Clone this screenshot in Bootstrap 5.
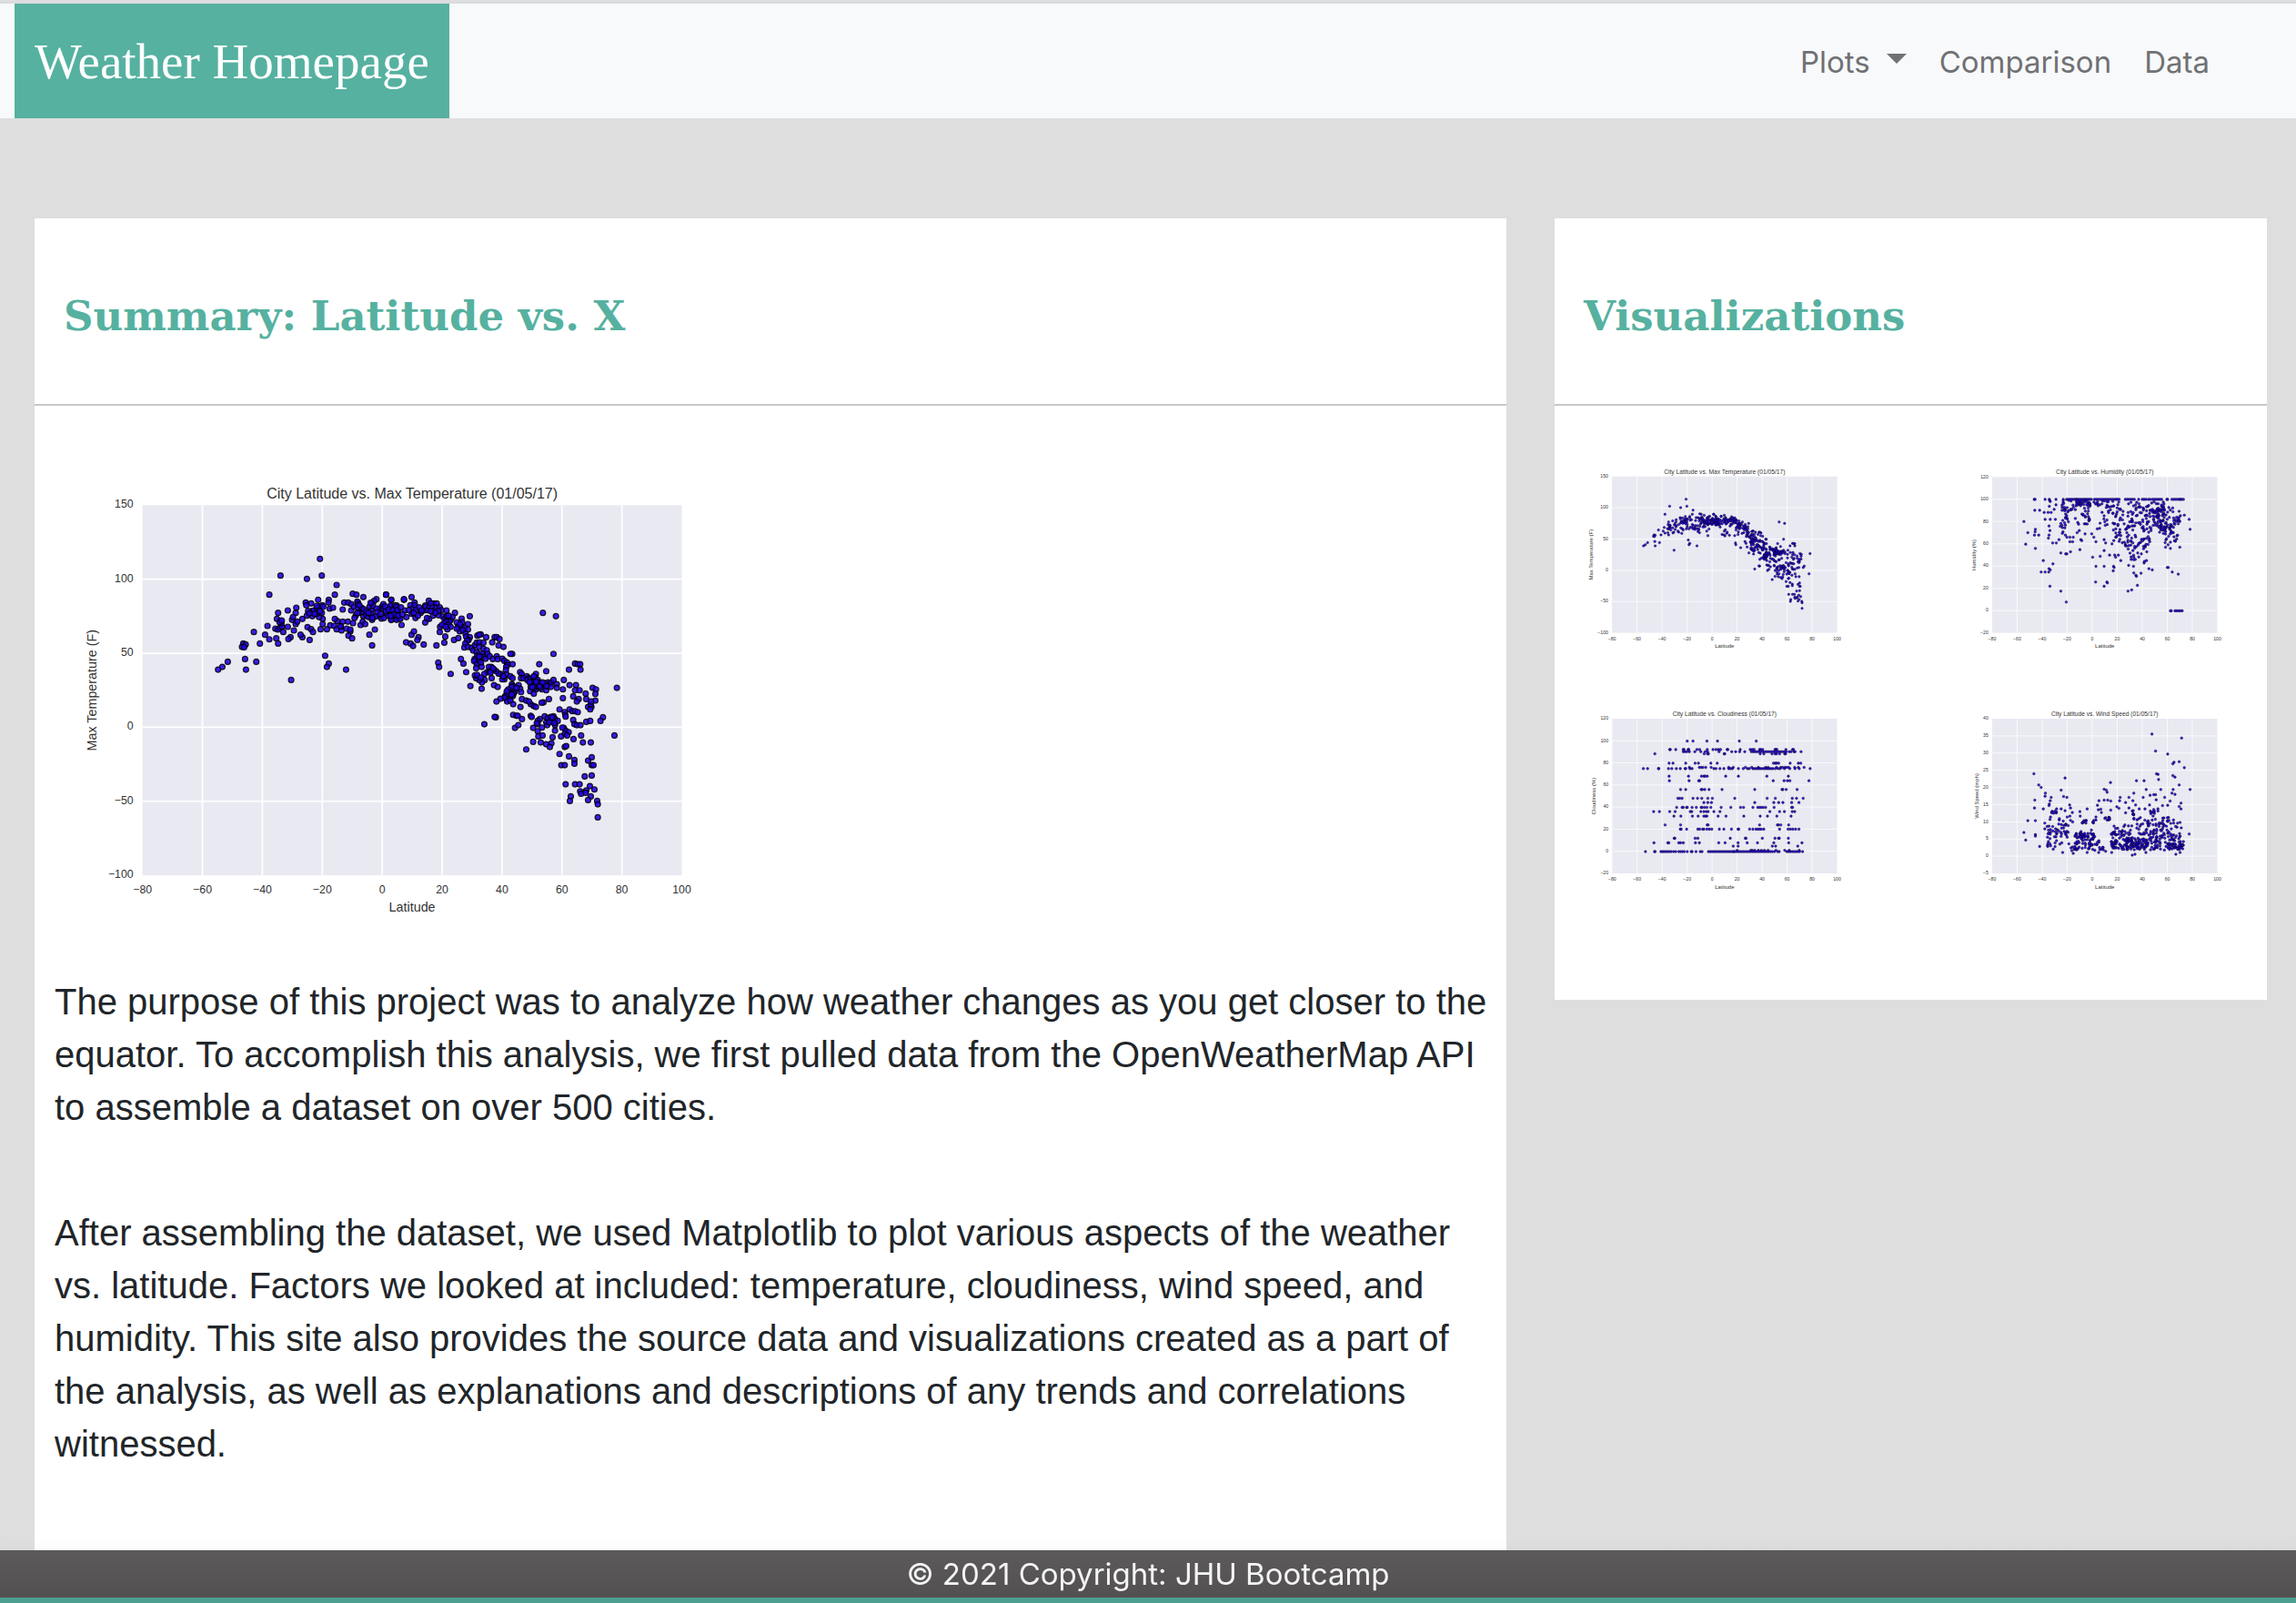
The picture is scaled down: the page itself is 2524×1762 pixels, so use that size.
<!DOCTYPE html>
<html lang="en">
<head>
<meta charset="utf-8">
<meta name="viewport" content="width=device-width, initial-scale=1">
<title>Weather Homepage</title>
<link rel="stylesheet" href="https://cdn.jsdelivr.net/npm/bootstrap@5.3.0/dist/css/bootstrap.min.css">
<style>
  :root { --teal: #56b1a0; }
  body { background: #dedede; font-family: Inter, "Liberation Sans", sans-serif; color: #212529; }
  .site-nav { background: #f8f9fb; border-top: 2px solid #dadce0; margin-top: 2px; padding: 0 77px 0 16px; }
  .site-brand { background: var(--teal); color: #fff; font-family: "Liberation Serif", serif; font-size: 55px; line-height: 82px; padding: 23px 22px 21px; margin: 0; }
  .site-brand:hover { color: #fff; }
  .site-nav .navbar-nav { padding-top: 2px; }
  .site-nav .navbar-nav .nav-link { color: #707173; font-size: 33px; line-height: 50px; padding: 8px 18px; }
  .site-nav .dropdown-toggle::after { margin-left: 18px; border-top-width: 11px; border-left-width: 11px; border-right-width: 11px; vertical-align: 10px; }
  .panels { display: grid; grid-template-columns: 31fr 15fr; gap: 53px; align-items: start; padding: 110px 32px 0 38px; }
  .panel { background: #fff; }
  .panel-title { color: var(--teal); font-family: "DejaVu Serif", serif; font-weight: 700; font-size: 45px; line-height: 60px; margin: 0; padding: 78px 32px 66px; border-bottom: 2px solid #c8c8c8; }
  .summary-body { padding: 58px 12px 54px 22px; font-family: "Liberation Sans", sans-serif; font-size: 40px; line-height: 58px; }
  .summary-body p { margin: 0 0 80px; }
  .summary-body .main-plot { width: 49%; padding-right: 5px; margin-bottom: 58px; }
  .thumbs { display: grid; grid-template-columns: 1fr 1fr; gap: 53px 98px; padding: 56px 23px 118px; }
  .plot { display: block; width: 100%; height: auto; font-family: "Liberation Sans", sans-serif; fill: #333; }
  .plot .area { fill: #e9e9f2; }
  .plot .rule { stroke: #fff; fill: none; }
  .plot .dots circle { fill: #2000e6; fill-opacity: .88; stroke: #000; stroke-opacity: .85; }
  .site-footer { background: linear-gradient(#5c5a5b, #535051); color: #f4f4f4; border-bottom: 6px solid #4c9e8f; font-size: 33px; line-height: 52px; box-shadow: 0 -2px 14px rgba(0,0,0,.03); }
</style>
</head>
<body>
<nav class="navbar navbar-expand site-nav">
  <a class="navbar-brand site-brand" href="#">Weather Homepage</a>
  <ul class="navbar-nav ms-auto">
    <li class="nav-item dropdown">
      <a class="nav-link dropdown-toggle" href="#" role="button" data-bs-toggle="dropdown" aria-expanded="false">Plots</a>
      <ul class="dropdown-menu">
        <li><a class="dropdown-item" href="#">Max Temperature</a></li>
        <li><a class="dropdown-item" href="#">Humidity</a></li>
        <li><a class="dropdown-item" href="#">Cloudiness</a></li>
        <li><a class="dropdown-item" href="#">Wind Speed</a></li>
      </ul>
    </li>
    <li class="nav-item"><a class="nav-link" href="#">Comparison</a></li>
    <li class="nav-item"><a class="nav-link" href="#">Data</a></li>
  </ul>
</nav>

<main class="panels">
  <section class="panel">
    <h1 class="panel-title">Summary: Latitude vs. X</h1>
    <div class="summary-body">
      <div class="main-plot"><svg class="plot" data-plot="temp" viewBox="-60 -48 2313 1530" role="img" aria-label="Max temperature plot"></svg></div>
      <p>The purpose of this project was to analyze how weather changes as you get closer to the equator. To accomplish this analysis, we first pulled data from the OpenWeatherMap API to assemble a dataset on over 500 cities.</p>
      <p>After assembling the dataset, we used Matplotlib to plot various aspects of the weather vs. latitude. Factors we looked at included: temperature, cloudiness, wind speed, and humidity. This site also provides the source data and visualizations created as a part of the analysis, as well as explanations and descriptions of any trends and correlations witnessed.</p>
    </div>
  </section>

  <aside class="panel">
    <h2 class="panel-title">Visualizations</h2>
    <div class="thumbs">
      <a href="#"><svg class="plot" data-plot="temp" data-stretch="1.012" viewBox="-58 -50 2295 1530" role="img" aria-label="Max temperature"></svg></a>
      <a href="#"><svg class="plot" data-plot="humidity" viewBox="0 6 960 640" role="img" aria-label="Humidity"></svg></a>
      <a href="#"><svg class="plot" data-plot="cloud" viewBox="6 9 960 640" role="img" aria-label="Cloudiness"></svg></a>
      <a href="#"><svg class="plot" data-plot="wind" viewBox="0 9 960 640" role="img" aria-label="Wind speed"></svg></a>
    </div>
  </aside>
</main>

<footer class="site-footer fixed-bottom text-center">© 2021 Copyright: JHU Bootcamp</footer>

<script src="https://cdn.jsdelivr.net/npm/bootstrap@5.3.0/dist/js/bootstrap.bundle.min.js"></script>
<script>
/* "x,y x,y" -> [[x,y],...], shifted right by dx */
function pts(s, dx) { return s.trim().split(/\s+/).map(function (p) { p = p.split(','); return [+p[0] + (dx || 0), +p[1]]; }); }
/* rows "y:x x x; y:x x" -> points */
function rows(s) {
  var out = [];
  s.trim().split(';').forEach(function (r) {
    var q = r.split(':');
    q[1].trim().split(/\s+/).forEach(function (x) {
      var m = x.split('-');
      if (m.length === 2) { for (var k = +m[0]; k <= +m[1]; k += 6) out.push([k, +q[0]]); }
      else out.push([+x, +q[0]]);
    });
  });
  return out;
}
/* repeatable scatter inside a box: [x0,x1,y0,y1,count,skew]; skew > 1 packs the points towards y1 */
function cloud(seed, boxes) {
  var out = [];
  function rnd() { seed = (seed * 16807) % 2147483647; return seed / 2147483647; }
  boxes.forEach(function (b) {
    for (var i = 0; i < b[4]; i++) out.push([b[0] + rnd() * (b[1] - b[0]), b[3] - Math.pow(rnd(), b[5] || 1) * (b[3] - b[2])]);
  });
  return out;
}

var tempLeft = pts(`815,283 685,338 821,338 772,349 870,369 648,401 864,401 923,398 935,401 958,409 1033,401 809,418 844,418 768,427 786,430 770,436 895,427 908,427 918,432 940,427 1001,416 993,422 985,430 1050,418
 737,444 735,461 709,453 677,461 673,481 685,487 642,504 597,524 634,533 648,548 671,545 677,562 617,562 562,562 570,565 558,573 565,574 568,613 605,622 571,648 511,622 493,639 479,648 720,682 832,602 844,628 838,639 901,648
 668,513 676,516 683,510 690,506 694,524 709,507 729,519 718,541 711,547 757,541 751,533 781,550 735,498 740,490 757,481 723,484 726,475 688,495 682,492 689,486 774,508 786,515 792,524 817,515 838,515 849,502 862,504 870,515 884,507 886,519 903,513 907,490 890,490 872,488 864,481 824,498 824,481 812,475 804,464
 790,472 789,455 795,453 776,455 772,470 806,444 812,440 823,436 826,441 821,461 847,447 858,444 843,427 890,450 918,453 927,441 938,424 941,432 940,444 952,444 933,470 929,478 924,495 949,501 956,490 964,498 958,472 945,461 957,458 938,461 968,470 975,475 987,484 987,475 984,464 985,450 979,440 990,438 996,516 978,533 987,568 915,522 909,536 921,545 915,516
 1011,447 1020,440 1024,432 1024,447 1010,472 1018,480 1026,478 1033,461 1045,450 1048,441 1050,484 1060,481 1056,467 1065,455 1060,444 1068,437 1072,452 1067,470 1075,480 1002,447 1004,459 998,473 797,464 780,463 815,456 804,438 883,505 945,436 960,449 968,456 975,461 982,428 988,478 1015,465 1040,470 1032,455`);
var tempRight = pts(`13,401 30,418 72,418 72,416 97,409 107,427 154,421 142,437 170,430 180,430 64,501 97,533 105,522 120,541 116,550 79,558 94,562 102,570 137,565 179,568 185,625 188,639 226,662 142,493 190,524 191,507 208,539 205,559 237,550 251,544 260,613 268,628 277,656 291,702 289,472 240,461 212,453
 10,440 28,437 43,436 47,441 22,450 35,452 50,452 62,443 75,453 30,484 48,484 60,481 80,475 98,464 93,436 101,446 108,436 112,450 122,443 127,461 110,478 118,470 138,453 143,441 150,452 157,440 161,430 166,444 173,453 180,444 190,443 195,452 186,469 168,470 155,481 148,478 185,455 175,461 40,466 28,471 53,470 67,466 88,452 104,461 130,453 160,455
 200,473 206,481 213,472 220,478 226,484 232,475 222,490 211,490 204,495 218,501 226,507 215,515 197,501 210,507 219,470 246,492 262,480 264,492 283,498 250,507 262,507 272,510 283,516 256,522 246,513 266,518 275,530 257,498 277,539 289,541 285,550 280,553 274,562 271,575 283,573 295,576 300,585 306,567 312,559 321,558 334,559 314,536 325,532 320,533 343,541 371,541 378,541 387,547 384,568 363,558 400,573 320,573 334,579 345,584
 312,590 320,596 330,596 338,604 324,605 313,604 305,613 309,622 303,619 312,630 321,618 326,625 328,639 310,643 320,605 341,612 348,596 355,604 365,613 378,604 381,613 396,612 403,619 412,625 430,630 429,596 423,596 413,633 409,639 408,650 410,664 403,680 396,680 391,662 384,661 376,653 369,648 360,639 352,639 346,656 355,653 337,662 361,676 338,682 329,690 320,682 310,676 306,667 313,665 325,674 328,711 369,699 381,705 366,644 357,658 400,670
 423,670 430,676 428,696 431,702 450,699 455,656 460,662 458,676 466,676 455,711 458,722 437,721 430,713 426,705 416,713 411,725 405,736 417,733 422,741 433,727 431,735 411,745 403,741 390,744 377,753 412,753 423,750 432,762 461,745 475,750 456,771 443,708 411,719 427,730
 477,670 483,676 479,682 490,679 497,685 507,662 505,673 500,670 513,682 521,691 505,691 497,696 490,705 488,719 500,727 507,713 502,708 517,705 511,699 526,696 533,701 527,713 521,708 541,716 544,702 547,690 552,696 558,690 565,682 556,705 576,696 576,708 599,682 596,713 541,653 518,630 493,690 512,694 537,693 542,702 486,689 500,702
 530,461 573,472 565,596 616,648 636,628 645,630 653,630 654,648 774,708 766,865 728,805 720,817 694,708 705,713 703,728 703,750 671,727 673,745 648,745 642,753 630,736 596,742 618,699 639,699 636,716 651,716 550,745 532,756 526,757 490,762 500,768 507,771 484,753
 375,805 371,804 337,828 438,840 449,831 461,811 432,797 443,800 447,800 490,800 493,804 536,802 520,811 513,817 513,828 510,825 527,839 498,840 513,851 515,868 529,865 498,886 523,888 475,911 541,894 558,891 553,903 562,871 570,849 570,831 562,820 550,814 541,822 544,831 556,804 565,802 570,811 579,817 585,779 602,788 604,797 605,803 599,840 605,849 615,854 602,860 610,865 590,868 594,839 618,779 627,785 636,785 645,788 630,814 634,828 642,831 654,831 656,865 631,877 662,888 688,888 673,820 686,817 679,771 690,771 686,779 688,762 689,753
 585,926 616,934 634,946 634,958 591,963 602,963 602,903 607,900 679,948 691,937 691,963 697,963 668,1000 691,997 605,1026 636,1026 651,1026 685,1032 700,1043 673,1046 653,1049 656,1057 671,1054 622,1066 619,1081 688,1066 679,1078 709,1081 711,1092 711,1135 546,808 557,812 568,824 551,822 560,805 519,702 529,690 495,706 508,688`, 1020);

var plots = {
  temp: { title: 'City Latitude vs. Max Temperature (01/05/17)', ylab: 'Max Temperature (F)', x0: 230, x1: 2008, y0: 106, y1: 1326, ticks: ['150','100','50','0','−50','−100'], k: 1, r: 9, yx: 80, points: tempLeft.concat(tempRight) },
  humidity: { title: 'City Latitude vs. Humidity (01/05/17)', ylab: 'Humidity (%)', x0: 120, x1: 864, y0: 73, y1: 588, ticks: ['120','100','80','60','40','20','0','−20'], k: .418, r: 4, yx: 68,
    points: rows(`147:259 262 295 309 331 355 366-396 400-450 458 464-520 524 530 534 540 560-592 604 616-628 636 642 650-684 697 700 714-738 742 746 752;515:709 712 724-750`)
    .concat(pts(`225,220 238,257 231,295 261,183 277,183 263,246 262,254 260,265 274,265 263,309 289,349 282,387 295,387 307,387 308,376 312,380 321,360 311,434 347,450 365,486 379,320 363,327 367,327 347,324 410,313 452,338 463,368 477,335 490,368 490,316 462,420 490,434 499,420 501,423 508,331 525,331 528,338 537,331 521,368 523,372 520,383 545,349 571,365 587,368 588,338 585,316 601,324 613,327 631,320 630,349 622,357 623,352 588,390 595,398 597,401 612,391 600,431 569,450 581,446 638,376 649,380 699,372 702,372 715,387 735,394 709,309 693,305 740,305 771,213 774,246 755,199 742,201 740,220 320,291 332,291 341,280 377,272 388,272 377,287 386,287 413,280 416,283 401,257 408,250 427,261 449,261 456,272 463,287 490,280 495,291 516,294 522,283 292,190 305,190 315,190 295,213 312,213 329,213 308,235 311,250 308,265 306,275 395,210 310,150 312,154 309,170 325,180 331,165`))
    .concat(cloud(71, [[345,372,150,280,32],[395,445,148,170,30],[400,442,165,230,20],[372,400,148,185,10],[450,525,150,175,18],[465,525,160,250,20],[525,550,152,295,28],[550,590,150,300,34],[563,605,225,348,24],[590,645,152,230,36],[605,645,225,310,28],[645,690,150,235,46],[655,690,165,210,16],[668,695,225,262,20],[690,738,172,300,46],[700,725,225,240,8]])) },
  cloud: { title: 'City Latitude vs. Cloudiness (01/05/17)', ylab: 'Cloudiness (%)', x0: 127, x1: 870, y0: 75, y1: 586, ticks: ['120','100','80','60','40','20','0','−20'], k: .418, r: 4, yx: 74,
    points: rows(`149:375 394 440 475 547 603;177:317 319 337 362 364 378 380 407 416 441 460 470 478 485 507 509 550 583 590 596 614 618 624 665 668 671 701 723 726;184:362 368 374 382 400 420 434 442 480 522 535 548 565 587-620 624-705 712 718 728 731 751;191:268 431 442 445 497 499 616 628 655 665 670 680 697 700;222:315 328 370 401 412 453 474 660 666 670 677 715 742 750;236:382 415 421 427 436 454 512 527 567 588 610 634 642 670 684 690 698 704 710 730 742 761;240:230 244 280 281 313 324 339 352 368 370 384 391 463 470 483 496 512 518 524 544 560 574 580 592-660 666 675 682 696 714 731 745 781;265:315 379 422 430 434 441 502 544 638 709;280:316 381 413 416 659 695 706 714 777;309:353 370 421 425 433 447 490 598 688 691 702 738;338:344 350 358 394 409 423 443 458 532 639 666 722 736 758;352:430 443 455 598 661 677 691 720 744;368:340 358 362 373 375 391 405 421 424 432 440 453 487 519 551 561 592 608 614 620 626 634 662 720 723;382:264 283 317 335 385 390 420 430 438 444 463 483 648 680 696 722 730;397:331 354 392 411 430 436 440 477 503 562 616 640 671 718;426:302 353 441 444 614 673 676 684 710;440:352 355 373 410 416 426 430 440 448 456 481 496 521 543 545 581 592 602 608 614 620 628 680 708 716 724 733 744;470:332 334 401 410 517 567 569 623 665 677 679 709;485:265 311 314 347 353 362 402 415 479 500 543 573 607 661 710 754;496:527 543 656 667 740;510:540 585 590 598 610 620 630 642 668 697 712 745;514:237 267 269 288 293 298-325 330 337 347-368 375 388 391 404 418 424 445-530 530-658 663 674 679 704-750 756`) },
  wind: { title: 'City Latitude vs. Wind Speed (01/05/17)', ylab: 'Wind Speed (mph)', x0: 120, x1: 864, y0: 75, y1: 586, ticks: ['40','35','30','25','20','15','10','5','0','−5'], k: .418, r: 4, yx: 76,
    points: pts(`648,126 746,139 660,182 700,192 738,217 721,219 717,224 755,237 663,257 668,259 670,276 717,263 724,268 738,294 774,309 258,257 274,294 282,302 361,271 348,311 296,321 295,331 261,344 315,335 312,346 356,332 367,335 511,286 490,308 497,311 500,318 597,280 622,280 629,309 588,321 677,309 718,309 714,321 724,325 260,370 289,373 238,412 263,412 225,451 231,476 263,458 263,463 277,497 309,357 308,362 318,384 313,400 333,373 348,373 332,384 361,379 376,360 379,370 385,385 377,397 410,382 411,397 434,373 379,411 386,416 463,400 463,410 468,361 473,346 490,344 502,344 512,347 479,374 481,385 471,376 512,377 495,402 500,410 543,335 541,346 572,335 585,346 561,352 561,386 532,366 539,371 572,370 583,380 594,360 606,373 619,335 625,373 640,360 642,328 654,326 660,326 662,343 690,335 708,347 700,361 683,362 744,354 738,365 744,373 771,456 752,481 294,420 294,439 308,430 302,431 448,443 353,517 388,520 434,517 472,517 515,517 583,526 592,523 628,517 727,523 741,517 495,513`)
    .concat(cloud(19, [[303,314,435,498,14],[320,372,425,458,18],[340,372,398,440,10],[305,332,380,410,7],[320,372,460,508,11],[372,398,485,512,8],[394,456,452,508,68],[394,420,445,470,8],[414,436,411,420,8],[452,460,411,420,4],[458,490,455,510,14],[490,512,400,418,9],[512,550,450,505,36],[520,550,420,460,9],[550,590,425,480,18],[550,590,468,508,32],[556,600,475,500,14],[585,594,378,408,8],[590,640,400,470,26],[590,640,470,508,48],[640,690,372,450,30],[640,690,450,510,40],[650,674,370,400,6],[690,745,400,460,22],[690,745,460,508,34],[700,752,485,508,26]])) }
};

function draw(svg) {
  var p = plots[svg.dataset.plot], k = p.k, h = '', i, x, y, n = p.ticks.length - 1;
  var st = +(svg.dataset.stretch || 1), y0 = p.y0, y1 = y0 + (p.y1 - y0) * st;
  h += '<rect class="area" x="' + p.x0 + '" y="' + y0 + '" width="' + (p.x1 - p.x0) + '" height="' + (y1 - y0) + '"/>';
  var d = '';
  for (i = 1; i < 9; i++) { x = p.x0 + (p.x1 - p.x0) * i / 9; d += 'M' + x + ' ' + y0 + 'V' + y1; }
  for (i = 1; i < n; i++) { y = y0 + (y1 - y0) * i / n; d += 'M' + p.x0 + ' ' + y + 'H' + p.x1; }
  h += '<path class="rule" stroke-width="' + 5 * k + '" d="' + d + '"/>';
  h += '<g class="dots" stroke-width="' + 3.5 * k + '">' + p.points.map(function (q) { return '<circle cx="' + q[0].toFixed(1) + '" cy="' + (y0 + (q[1] - y0) * st).toFixed(1) + '" r="' + p.r + '"/>'; }).join('') + '</g>';
  var mid = (p.x0 + p.x1) / 2;
  h += '<text x="' + mid + '" y="' + (y0 - 21 * k) + '" text-anchor="middle" font-size="' + 48 * k + '">' + p.title + '</text>';
  h += '<g font-size="' + 37 * k + '">';
  for (i = 0; i <= 9; i++) h += '<text text-anchor="middle" x="' + (p.x0 + (p.x1 - p.x0) * i / 9) + '" y="' + (y1 + 59 * k) + '">' + String(i * 20 - 80).replace('-', '−') + '</text>';
  for (i = 0; i <= n; i++) h += '<text text-anchor="end" x="' + (p.x0 - 30 * k) + '" y="' + (y0 + (y1 - y0) * i / n + 9 * k) + '">' + p.ticks[i] + '</text>';
  h += '</g><g font-size="' + 43 * k + '" text-anchor="middle"><text x="' + mid + '" y="' + (y1 + 120 * k) + '">Latitude</text>';
  h += '<text transform="translate(' + (p.yx - 2) + ' ' + (y0 + y1) / 2 + ') rotate(-90)">' + p.ylab + '</text></g>';
  svg.innerHTML = h;
}
document.querySelectorAll('svg[data-plot]').forEach(draw);
</script>
</body>
</html>
